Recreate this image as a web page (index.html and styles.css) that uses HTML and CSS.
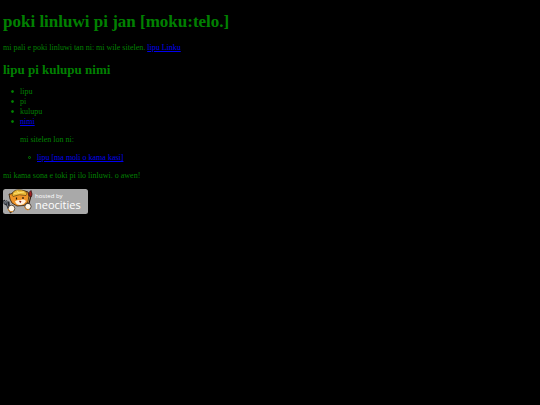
FILE: index.html
```
<!DOCTYPE html>
<html lang="tok">
  <head>
    <title>poki linluwi pi jan [moku:telo.]</title>
    <meta charset="utf-8" />
    <meta name="viewport" content="width=device-width" />
    <link rel="stylesheet" href="styles.css">
  </head>
  <body>
    <h1>poki linluwi pi jan [moku:telo.]</h1>
    <p>mi pali e poki linluwi tan ni: mi wile sitelen. <a href="#linku">lipu Linku</a></p>

    <h2>lipu pi kulupu nimi</h2>
    <ul>
      <li>lipu</li>
      <li>pi</li>
      <li>kulupu</li>
      <li><a href="#nimi">nimi</a>
        <p>mi sitelen lon ni:</p>
        <ul>
          <li><a href="#kasi">lipu [ma moli o kama kasi]</a></li>
        </ul>
      </li>
    </ul>

    <p>mi kama sona e toki pi ilo linluwi. o awen!</p>

    <a class="badge" href="#neocities" aria-label="hosted by neocities">
      <svg width="85" height="25" viewBox="0 0 85 25">
        <rect width="85" height="25" rx="2.5" fill="#a9a9a9" />
        <!-- head -->
        <path d="M6 5 L8 5 L12 2 L22 2 L25 3 L26 7 L25 13 L21 16.5 L14 17 L9 14 L7 10 Z" fill="#ef9428" stroke="#2a1808" stroke-width="0.8" stroke-linejoin="round" />
        <path d="M9 6 Q10 1 15 0.8 Q23 0.6 24 5 L23 6.5 Q16 4.5 10 7.5 Z" fill="#edbb38" stroke="#4a3008" stroke-width="0.6" />
        <path d="M11 4.5 L21 3 M14 1.5 L16 4.5" stroke="#ffe680" stroke-width="0.8" />
        <path d="M12 12.5 Q14.5 10 17 11.5 Q20 9.5 23 12 Q21 16 17 16 Q13.5 16 12 12.5 Z" fill="#fff0dc" />
        <path d="M13.5 8.5 v2 M20 8 v2" stroke="#20140a" stroke-width="1.2" />
        <path d="M16 12 h2.5 l-1.2 2.2 z" fill="#8e2018" />
        <!-- fork -->
        <path d="M1 11 L1.5 14.5 L6 17 L5.5 12.5 M3.2 11.5 L4.5 17 L8 24" fill="none" stroke="#25272b" stroke-width="1.8" />
        <path d="M1.5 12 L2.2 15 M3.5 12 L4.8 17 L8 23" fill="none" stroke="#8993a0" stroke-width="0.8" />
        <!-- brush -->
        <path d="M27.5 7 L24 20" stroke="#30160c" stroke-width="2" />
        <path d="M27 7 L24 18" stroke="#d8a24a" stroke-width="0.8" />
        <path d="M26 7 L26 3.5 L28 1.5 L29 5 L28.5 7.5 Z" fill="#a41e20" stroke="#351010" stroke-width="0.8" />
        <!-- paws -->
        <circle cx="8.5" cy="19.5" r="3.3" fill="#fff6e6" stroke="#24160c" stroke-width="0.7" />
        <circle cx="25" cy="17.5" r="3.1" fill="#fff6e6" stroke="#24160c" stroke-width="0.7" />
        <path d="M5 20 a3.5 3.5 0 0 0 5 2.5 M22 18 a3 3 0 0 0 4 2.6" fill="none" stroke="#e8912a" stroke-width="1" />
        <text class="badge-small" x="32" y="9">hosted by</text>
        <text class="badge-name" x="32" y="20">neocities</text>
      </svg>
    </a>
  </body>
</html>
```
FILE: styles.css
```
body {
  margin: 12px 3px;
  background: #000;
  color: green;
  font-family: "Liberation Serif", "Times New Roman", serif;
  font-size: 8px;
  line-height: 10px;
}

h1 {
  margin: 0 0 11px;
  font-size: 17px;
  line-height: 20px;
}

h2 {
  margin: 10px 0;
  font-size: 13px;
  line-height: 14px;
}

p,
ul {
  margin: 8px 0;
}

ul {
  padding-left: 17px;
  list-style: none;
}

li::before {
  content: "";
  display: inline-block;
  box-sizing: border-box;
  width: 3px;
  height: 3px;
  margin: 0 6px 1px -9px;
  border: 1px solid green;
  border-radius: 50%;
  background: green;
}

li li::before {
  background: none;
}

a {
  color: #0000ee;
}

.badge,
.badge svg {
  display: block;
}

.badge {
  width: max-content;
}

.badge text {
  fill: #fff;
  font-family: "Open Sans", "Noto Sans", sans-serif;
}

.badge-small {
  font-size: 6px;
}

.badge-name {
  font-size: 11px;
  font-weight: 500;
}
```
